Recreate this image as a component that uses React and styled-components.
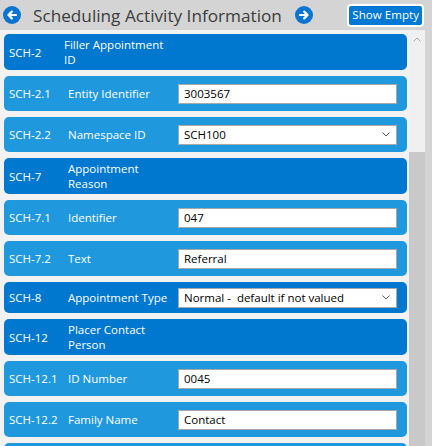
import React from "react";
import styled, { createGlobalStyle } from "styled-components";

const fields = [
    { code: "SCH-2", label: "Filler Appointment ID", group: true, inset: true },
    { code: "SCH-2.1", label: "Entity Identifier", value: "3003567" },
    { code: "SCH-2.2", label: "Namespace ID", value: "SCH100", select: true },
    { code: "SCH-7", label: "Appointment Reason", group: true },
    { code: "SCH-7.1", label: "Identifier", value: "047" },
    { code: "SCH-7.2", label: "Text", value: "Referral" },
    { code: "SCH-8", label: "Appointment Type", value: "Normal -  default if not valued", select: true, dark: true, compact: true },
    { code: "SCH-12", label: "Placer Contact Person", group: true },
    { code: "SCH-12.1", label: "ID Number", value: "0045" },
    { code: "SCH-12.2", label: "Family Name", value: "Contact" },
];

function CircleArrow({ dir }) {
    const d = dir === "left" ? "M13 9H5.5M8.8 5.6L5.4 9l3.4 3.4" : "M5 9h7.5M9.2 5.6L12.6 9l-3.4 3.4";
    return (
        <svg width="18" height="18" viewBox="0 0 18 18">
            <circle cx="9" cy="9" r="9" fill="#0a74d2" />
            <path d={d} fill="none" stroke="#fff" strokeWidth="2.2" strokeLinecap="round" strokeLinejoin="round" />
        </svg>
    );
}

function Chevron({ up }) {
    return (
        <svg width="8" height="5" viewBox="0 0 8 5">
            <path d={up ? "M0.5 4.5L4 1l3.5 3.5" : "M0.5 0.5L4 4l3.5-3.5"} fill="none" stroke={up ? "#a8a8a8" : "#606060"} strokeWidth="1" />
        </svg>
    );
}

function FieldRow({ field }) {
    if (field.group) {
        return (
            <Row $dark>
                <Code>{field.code}</Code>
                <GroupLabel $inset={field.inset}>{field.label}</GroupLabel>
            </Row>
        );
    }
    return (
        <Row $dark={field.dark} $compact={field.compact}>
            <Code>{field.code}</Code>
            <Label>{field.label}</Label>
            {field.select ? (
                <SelectBox>
                    <span>{field.value}</span>
                    <SelectArrow><Chevron /></SelectArrow>
                </SelectBox>
            ) : (
                <TextInput defaultValue={field.value} />
            )}
        </Row>
    );
}

export default function App() {
    return (
        <React.Fragment>
            <GlobalStyle />
            <Page>
                <Header>
                    <IconButton><CircleArrow dir="left" /></IconButton>
                    <Title>Scheduling Activity Information</Title>
                    <IconButton><CircleArrow dir="right" /></IconButton>
                    <ShowEmpty>Show Empty</ShowEmpty>
                </Header>
                <Body>
                    <List>
                        {fields.map(f => <FieldRow key={f.code} field={f} />)}
                        {/* next row, scrolled below the fold */}
                        <Row />
                    </List>
                    <ScrollBar>
                        <ScrollUp><Chevron up /></ScrollUp>
                        <ScrollThumb />
                    </ScrollBar>
                </Body>
            </Page>
        </React.Fragment>
    );
}

const GlobalStyle = createGlobalStyle`
    html, body {
        margin: 0;
        padding: 0;
        overflow: hidden;
        background: #d4d4d4;
    }
    body {
        font-family: "Segoe UI", "Open Sans", "Noto Sans", sans-serif;
    }
`

const Page = styled.div`
    width: 432px;
    height: 446px;
    display: flex;
    flex-direction: column;
    overflow: hidden;
`

const Header = styled.div`
    height: 30px;
    flex-shrink: 0;
    display: flex;
    align-items: center;
    padding: 0 8px 0 3px;
`

const IconButton = styled.div`
    width: 18px;
    height: 18px;
    display: flex;
`

const Title = styled.div`
    margin: 0 13px 0 12px;
    font-size: 17.2px;
    color: #3c3c3c;
    white-space: nowrap;
`

const ShowEmpty = styled.button`
    margin-left: auto;
    height: 23px;
    padding: 0 3px;
    border: 2px solid #fff;
    border-radius: 4px;
    background: #0078d4;
    color: #fff;
    font-family: inherit;
    font-size: 11.6px;
    line-height: 1;
`

const Body = styled.div`
    flex: 1;
    display: flex;
    min-height: 0;
`

const List = styled.div`
    width: 409px;
    box-sizing: border-box;
    padding: 4px 2px 0 4px;
    background: #f2f2f2;
    display: flex;
    flex-direction: column;
    gap: 6px;
`

const Row = styled.div`
    flex-shrink: 0;
    display: grid;
    grid-template-columns: 59px 110px 219px;
    align-items: center;
    min-height: ${props => props.$compact ? 31 : 35}px;
    box-sizing: border-box;
    padding: 3px 10px 3px 5px;
    border-radius: 5px;
    background: ${props => props.$dark ? "#0078cf" : "#2098dd"};
    color: #fff;
    font-size: 11.5px;
`

const Code = styled.div`
    white-space: nowrap;
`

const Label = styled.div`
    white-space: nowrap;
`

const GroupLabel = styled.div`
    width: 104px;
    line-height: 15px;
    margin-left: ${props => props.$inset ? "-4px" : "0"};
`

const TextInput = styled.input`
    width: 219px;
    height: 20px;
    box-sizing: border-box;
    border: 1px solid #a8a8a8;
    padding: 0 5px;
    font-family: inherit;
    font-size: 11.5px;
    color: #000;
    background: #fff;
    outline: none;
`

const SelectBox = styled.div`
    position: relative;
    width: 219px;
    height: 20px;
    box-sizing: border-box;
    border: 1px solid #a8a8a8;
    padding: 0 5px;
    display: flex;
    align-items: center;
    font-size: 11.5px;
    color: #000;
    background: #fff;
    white-space: pre;
`

const SelectArrow = styled.span`
    position: absolute;
    right: 6px;
    top: 6px;
    display: flex;
`

const ScrollBar = styled.div`
    width: 16px;
    display: flex;
    flex-direction: column;
    background: #f0f0f0;
`

const ScrollUp = styled.div`
    height: 17px;
    display: flex;
    align-items: center;
    justify-content: center;
    margin-top: 1px;
`

const ScrollThumb = styled.div`
    margin-top: 104px;
    flex: 1;
    background: #c9c9c9;
`
